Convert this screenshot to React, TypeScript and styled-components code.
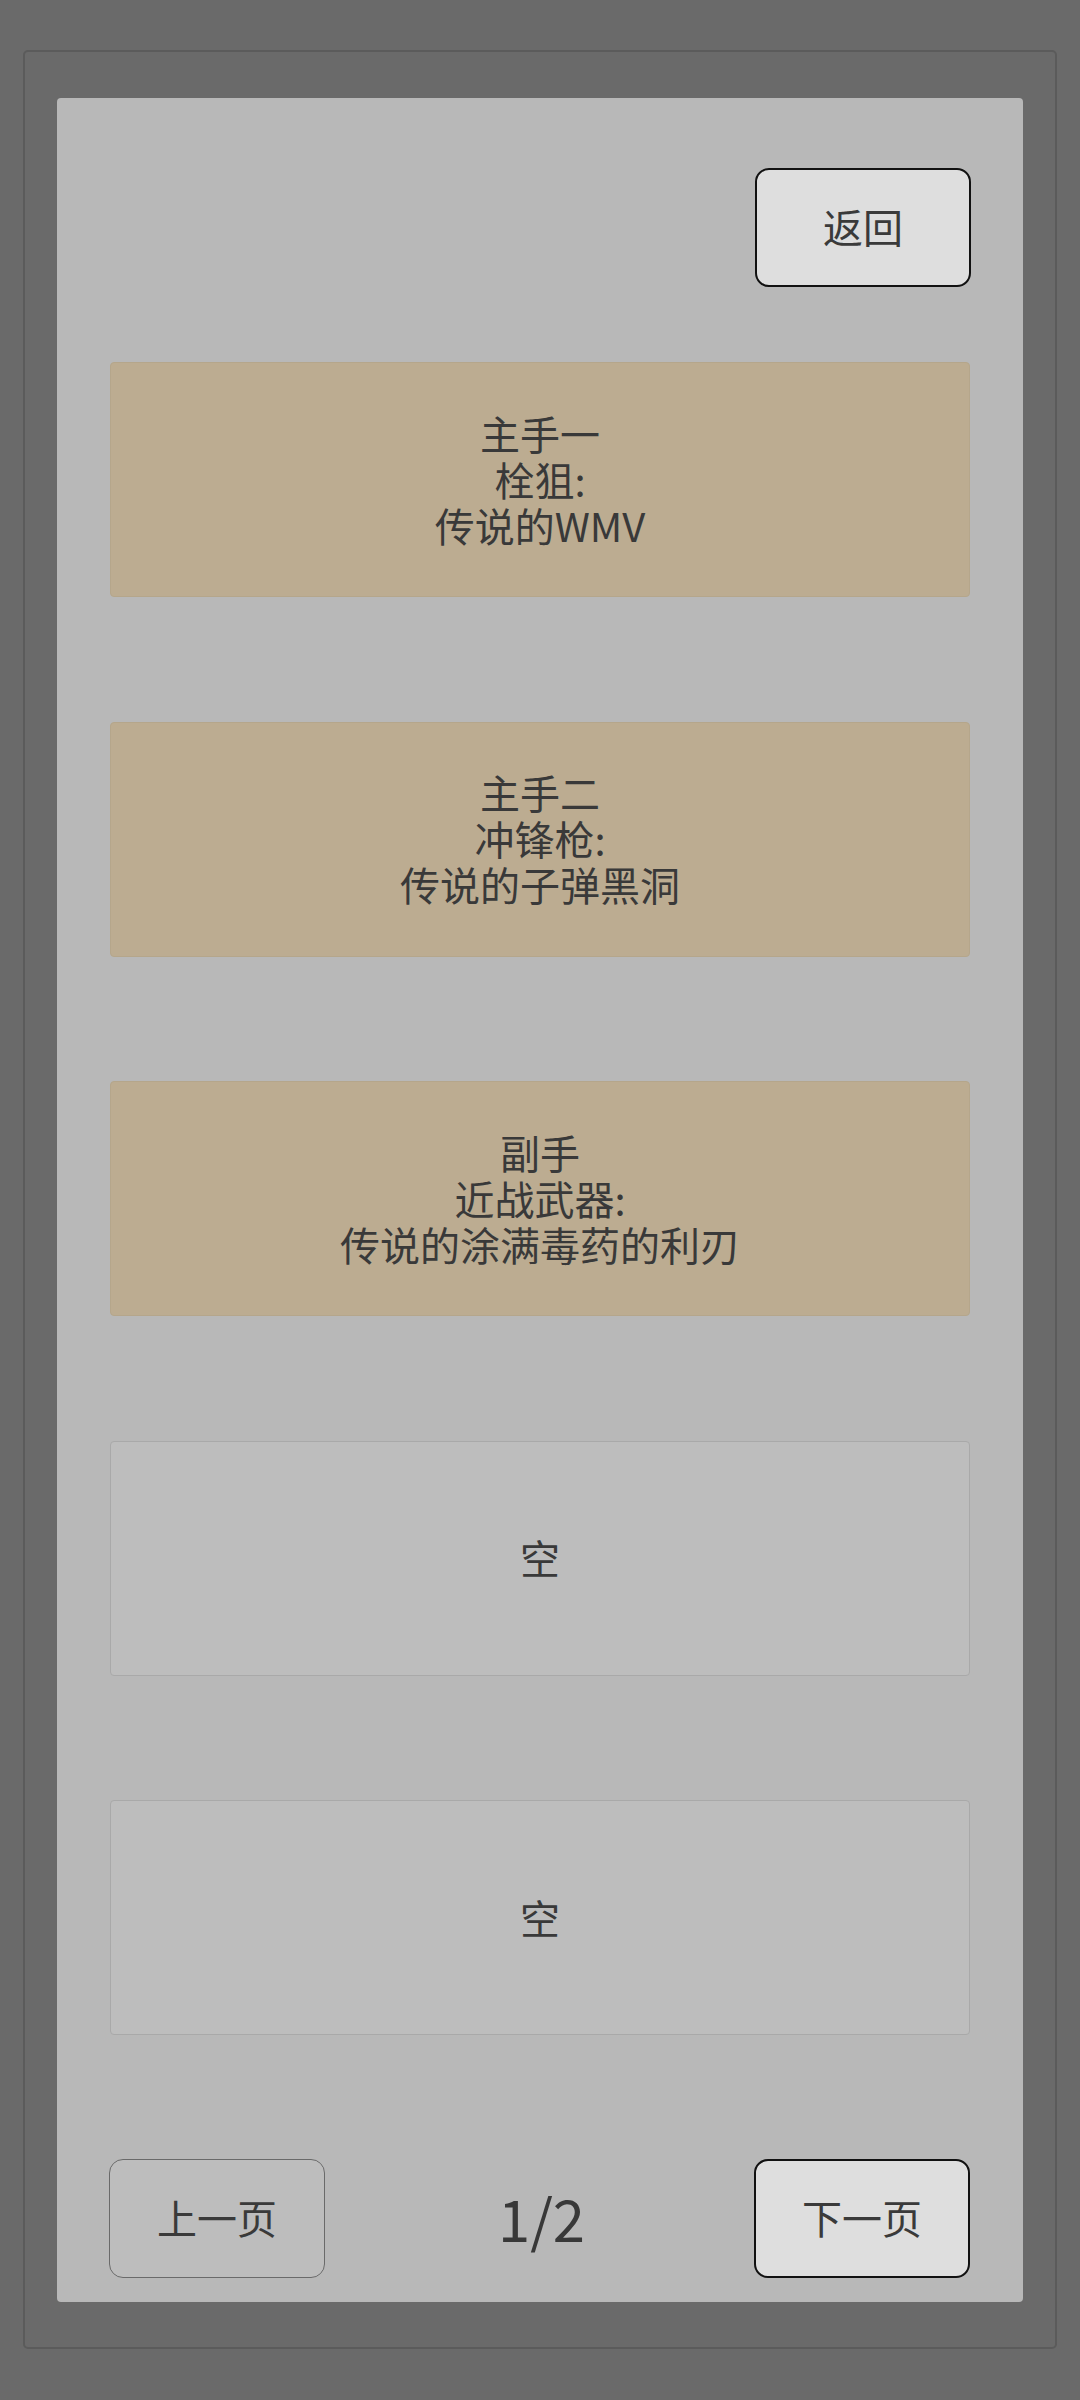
import React from "react";
import styled, { createGlobalStyle } from "styled-components";

const Global = createGlobalStyle`
  html, body {
    margin: 0;
    padding: 0;
    background: #6a6a6a;
  }
  body {
    font-family: "Noto Sans CJK SC", "Noto Sans", sans-serif;
  }
`;

const Page = styled.div`
  width: 1080px;
  height: 2400px;
  box-sizing: border-box;
  padding: 50px 23px 0 23px;
  background: #6a6a6a;
`;

const Frame = styled.div`
  box-sizing: border-box;
  height: 2299px;
  border: 2px solid #5b5b5b;
  border-radius: 5px;
  background: #6a6a6a;
  padding: 46px 32px 45px 32px;
`;

const Panel = styled.div`
  box-sizing: border-box;
  height: 2204px;
  background: #b8b8b8;
  border-radius: 4px;
  padding: 70px 52px 23px 53px;
  display: flex;
  flex-direction: column;
`;

const TopBar = styled.div`
  display: flex;
  justify-content: flex-end;
  margin-bottom: 75px;
`;

const Button = styled.div<{ $active?: boolean }>`
  box-sizing: border-box;
  width: 216px;
  height: 119px;
  border-radius: 14px;
  display: flex;
  align-items: center;
  justify-content: center;
  padding-bottom: 4px;
  font-size: 40px;
  color: #3a3a3a;
  background: ${(p) => (p.$active ? "#dedede" : "#bdbdbd")};
  border: ${(p) => (p.$active ? "2.5px solid #111" : "1.5px solid #6a6a6a")};
`;

const List = styled.div`
  display: flex;
  flex-direction: column;
  gap: 124.5px;
`;

const Slot = styled.div<{ $filled?: boolean }>`
  box-sizing: border-box;
  height: 235px;
  width: 860px;
  border-radius: 4px;
  display: flex;
  align-items: center;
  justify-content: center;
  text-align: center;
  padding-bottom: 2px;
  font-size: 40px;
  line-height: 46px;
  color: #393939;
  background: ${(p) => (p.$filled ? "#bcac91" : "#bdbdbd")};
  border: 1px solid ${(p) => (p.$filled ? "#b5a68b" : "#a9a9a9")};
`;

const Line = styled.div`
  white-space: nowrap;
`;

const Pager = styled.div`
  margin-top: 124px;
  display: flex;
  align-items: center;
  justify-content: space-between;
  padding-right: 1px;
  margin-left: -1px;
`;

const PageNum = styled.div`
  font-size: 58px;
  color: #383838;
  padding-left: 4px;
  padding-bottom: 4px;
`;

const slots = [
  ["主手一", "栓狙:", "传说的WMV"],
  ["主手二", "冲锋枪:", "传说的子弹黑洞"],
  ["副手", "近战武器:", "传说的涂满毒药的利刃"],
  null,
  null,
];

export default function App() {
  return (
    <>
      <Global />
      <Page>
        <Frame>
          <Panel>
            <TopBar>
              <Button $active>返回</Button>
            </TopBar>
            <List>
              {slots.map((s, i) =>
                s ? (
                  <Slot key={i} $filled>
                    <div>
                      {s.map((line, j) => (
                        <Line key={j}>{line}</Line>
                      ))}
                    </div>
                  </Slot>
                ) : (
                  <Slot key={i}>空</Slot>
                )
              )}
            </List>
            <Pager>
              <Button>上一页</Button>
              <PageNum>1/2</PageNum>
              <Button $active>下一页</Button>
            </Pager>
          </Panel>
        </Frame>
      </Page>
    </>
  );
}
